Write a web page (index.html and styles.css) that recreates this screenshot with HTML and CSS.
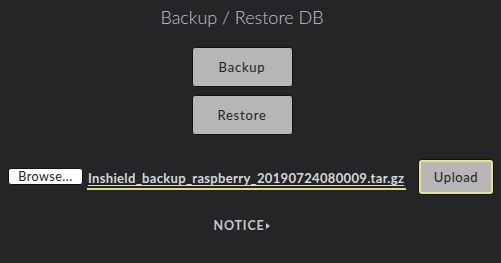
FILE: index.html
```html
<!DOCTYPE html>
<html>
<head>
<meta charset="utf-8">
<link rel="stylesheet" href="styles.css">
</head>
<body>
<div class="page">
  <h1 class="title">Backup / Restore DB</h1>
  <div class="actions">
    <button class="btn">Backup</button>
    <button class="btn">Restore</button>
  </div>
  <div class="file-row">
    <span class="browse">Browse...</span>
    <span class="filename"><span class="fname-text">Inshield_backup_raspberry_20190724080009.tar.gz</span></span>
    <button class="upload">Upload</button>
  </div>
  <div class="notice">NOTICE<span class="tri"></span></div>
</div>
</body>
</html>
```
FILE: styles.css
```css
html, body {
  margin: 0;
  padding: 0;
  background: #232527;
}
.page {
  width: 501px;
  height: 263px;
  box-sizing: border-box;
  padding-right: 17px;
  display: flex;
  flex-direction: column;
  align-items: center;
  font-family: Lato, "Open Sans", sans-serif;
}
.title {
  margin: 5px 0 0 0;
  font-size: 18px;
  line-height: 24px;
  font-weight: 300;
  color: #c4c4c4;
}
.actions {
  margin-top: 18px;
  display: flex;
  flex-direction: column;
  gap: 8px;
}
.btn {
  width: 101px;
  height: 40px;
  background: #b6b6b6;
  border: 1px solid #111213;
  border-radius: 3px;
  font-family: Lato, sans-serif;
  font-size: 13px;
  letter-spacing: 0.8px;
  color: #222;
  padding: 0;
}
.file-row {
  align-self: stretch;
  margin-top: 25px;
  display: flex;
  align-items: center;
  padding-left: 8px;
}
.file-row > * {
  flex-shrink: 0;
}
.browse {
  width: 75px;
  height: 17px;
  box-sizing: border-box;
  background: #ffffff;
  border: 1px solid #111;
  border-radius: 3px;
  font-size: 12.5px;
  line-height: 15px;
  letter-spacing: 0.5px;
  color: #222;
  text-align: center;
  margin-top: -2px;
}
.filename {
  margin-left: 4px;
  width: 319px;
  padding-left: 1px;
  border-bottom: 2px solid #e2d879;
  height: 21px;
  box-sizing: border-box;
  display: flex;
  align-items: center;
  margin-top: 4px;
}
.fname-text {
  font-size: 13px;
  font-weight: 700;
  letter-spacing: 0.33px;
  color: #d8d8d8;
  text-decoration: underline;
  text-underline-offset: 2px;
  white-space: nowrap;
}
.upload {
  margin-left: 13px;
  width: 74px;
  height: 34px;
  box-sizing: border-box;
  background: #b6b6b6;
  border: 2px solid #ece57c;
  outline: 1px solid #111;
  border-radius: 2px;
  font-family: Lato, sans-serif;
  font-size: 13px;
  letter-spacing: 0.6px;
  color: #222;
  padding: 0;
}
.notice {
  margin-top: 24px;
  font-size: 12.5px;
  font-weight: 700;
  letter-spacing: 0.8px;
  color: #c8c8c8;
  display: flex;
  align-items: center;
}
.tri {
  margin-left: 2px;
  width: 0;
  height: 0;
  border-left: 4px solid #c8c8c8;
  border-top: 3.5px solid transparent;
  border-bottom: 3.5px solid transparent;
}
```
